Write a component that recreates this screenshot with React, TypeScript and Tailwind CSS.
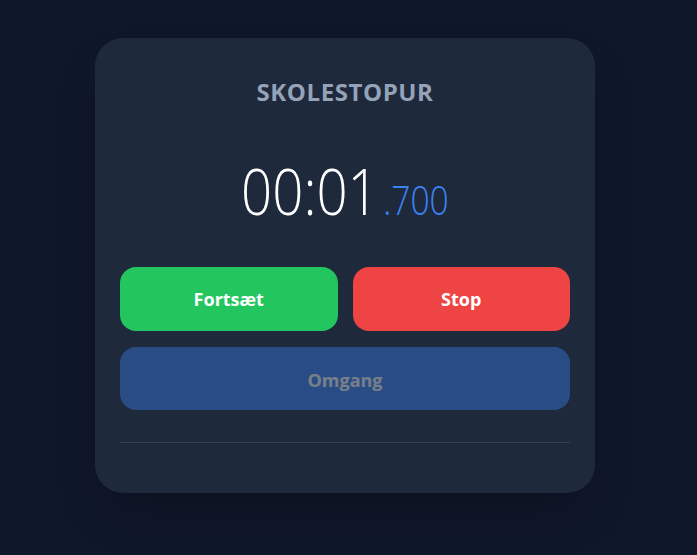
import React from "react";

export default function App() {
  return (
    <div
      className="min-h-screen w-full bg-[#0f172a] flex justify-center pt-[38px] pr-[7px]"
      style={{ fontFamily: '"Open Sans", "Noto Sans", sans-serif' }}
    >
      <div className="w-[500px] h-[455px] bg-[#1e293b] rounded-[28px] shadow-2xl px-[25px] pt-[38px] flex flex-col">
        <h1 className="text-center text-[24px] leading-[32px] font-bold tracking-wide text-[#94a3b8]">
          SKOLESTOPUR
        </h1>
        <div className="mt-[50px] h-[64px] flex items-baseline justify-center text-white leading-none">
          <span className="inline-block text-[65px] font-light leading-none scale-x-[0.84] -ml-[13px] -mr-[8px]">
            00:01
          </span>
          <span className="inline-block text-[40px] font-light leading-none text-[#3b82f6] scale-x-[0.84] -mx-[6px]">
            .700
          </span>
        </div>
        <div className="mt-[45px] grid grid-cols-2 gap-[15px]">
          <button className="h-[64px] rounded-[16px] bg-[#22c55e] text-white text-[18px] font-bold">
            Fortsæt
          </button>
          <button className="h-[64px] rounded-[16px] bg-[#ef4444] text-white text-[18px] font-bold">
            Stop
          </button>
        </div>
        <button className="mt-[16px] h-[63px] rounded-[16px] bg-[#3b82f6] opacity-40 text-white text-[18px] font-bold pt-[3px]">
          Omgang
        </button>
        <div className="mt-[32px] border-t border-[#334155]" />
      </div>
    </div>
  );
}
